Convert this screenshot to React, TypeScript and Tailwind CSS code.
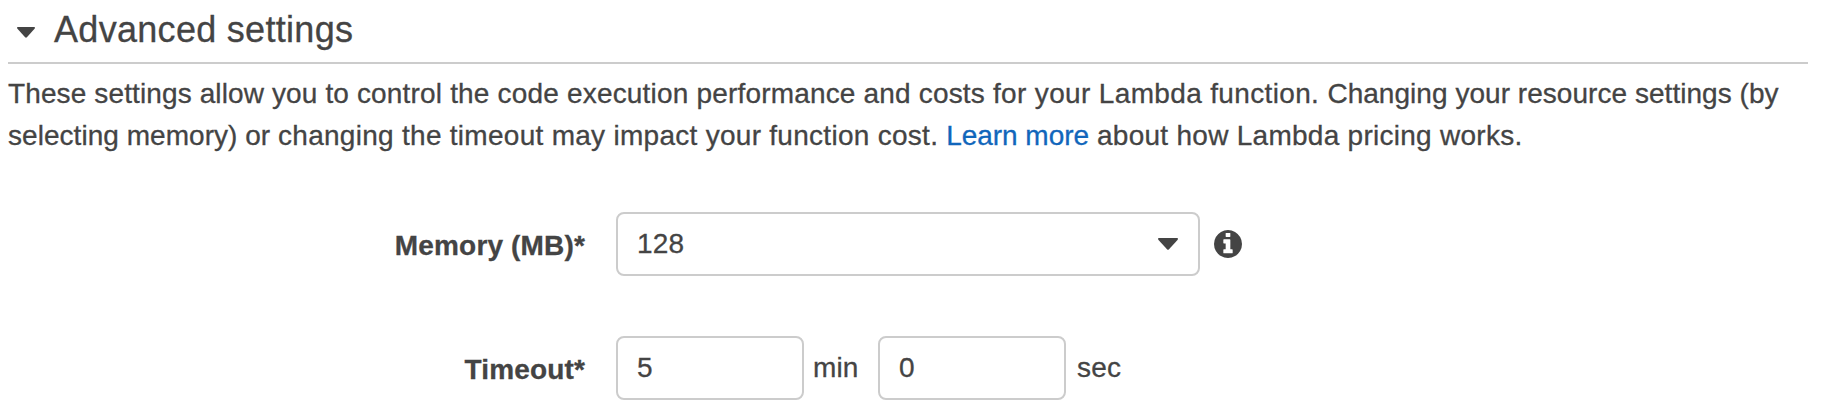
import React from "react";

function Caret({ className }: { className: string }) {
  return (
    <svg viewBox="0 0 20 12" preserveAspectRatio="none" fill="currentColor" className={className} aria-hidden="true">
      <path d="M1 0H19Q20 0 20 .8Q20 1.4 19.500 2L11 11.300Q10 12.300 9 11.300L.5 2Q0 1.400 0 .8Q0 0 1 0Z" />
    </svg>
  );
}

function InfoIcon() {
  return (
    <svg viewBox="128 128 1536 1536" fill="currentColor" className="ml-[14px] size-7" aria-hidden="true">
      <path d="M1152 1376v-160q0-14-9-23t-23-9h-96v-512q0-14-9-23t-23-9h-320q-14 0-23 9t-9 23v160q0 14 9 23t23 9h96v320h-96q-14 0-23 9t-9 23v160q0 14 9 23t23 9h448q14 0 23-9t9-23zM1024 480v-160q0-14-9-23t-23-9h-192q-14 0-23 9t-9 23v160q0 14 9 23t23 9h192q14 0 23-9t9-23zM1664 896q0 209-103 385.500t-279.500 279.500-385.500 103-385.500-103-279.500-279.500-103-385.500 103-385.500 279.500-279.500 385.500-103 385.500 103 279.500 279.500 103 385.500z" />
    </svg>
  );
}

function Field({ label, children }: { label: string; children: React.ReactNode }) {
  return (
    <div className="flex h-16 items-center">
      <label className="w-[585px] pt-[3px] text-right font-bold">{label}</label>
      <div className="ml-[31px] flex items-center">{children}</div>
    </div>
  );
}

function NumberBox({ value }: { value: string }) {
  return (
    <div className="flex h-16 w-[188px] items-center rounded-lg border-2 border-[#ccc] pl-[19px]">{value}</div>
  );
}

export default function App() {
  return (
    <main className="h-[420px] overflow-hidden bg-white font-['Liberation_Sans',Arial,sans-serif] text-[28px] leading-[42px] tracking-[0.16px] whitespace-nowrap text-[#444] [-webkit-text-stroke:0.3px_currentColor]">
      <header className="ml-2 flex h-16 w-[1800px] items-center border-b-2 border-[#ccc] pb-[3px] pl-[9px]">
        <Caret className="mt-[6px] h-[11px] w-[18px]" />
        <h1 className="ml-[19px] text-[36px] leading-[42px] tracking-[0.3px]">Advanced settings</h1>
      </header>
      <p className="mt-[9px] ml-2">
        <span className="tracking-[0.12px]">These settings allow you to </span>
        <span className="tracking-[0.18px]">control the code execution performance and costs </span>
        <span className="tracking-[0.35px]">for your Lambda function. </span>
        <span className="tracking-[0.04px]">Changing your resource settings (by</span>
        <br />
        <span className="tracking-[0.04px]">selecting memory) or </span>
        <span className="tracking-[0.28px]">changing the timeout may impact your function cost. </span>
        <a className="tracking-[-0.05px] text-[#1166bb]">Learn more</a>
        <span className="tracking-[0.27px]"> about how Lambda pricing works.</span>
      </p>
      <form className="mt-[55px] flex flex-col gap-[60px]">
        <Field label="Memory (MB)*">
          <div className="flex h-16 w-[584px] items-center justify-between rounded-lg border-2 border-[#ccc] pr-5 pl-[19px]">
            <span>128</span>
            <Caret className="h-[12px] w-[20px]" />
          </div>
          <InfoIcon />
        </Field>
        <Field label="Timeout*">
          <NumberBox value="5" />
          <span className="w-[74px] pl-[9px]">min</span>
          <NumberBox value="0" />
          <span className="pl-[11px]">sec</span>
        </Field>
      </form>
    </main>
  );
}
